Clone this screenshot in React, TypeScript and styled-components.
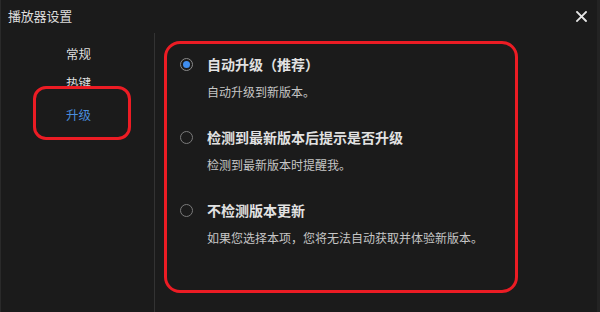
import React from "react";
import styled, { createGlobalStyle } from "styled-components";

const Global = createGlobalStyle`
  html, body { margin: 0; padding: 0; background: #1b1b1b; }
  body { font-family: "Noto Sans CJK SC", "Noto Sans", sans-serif; }
`;

const Window = styled.div`
  width: 600px;
  height: 312px;
  box-sizing: border-box;
  background: #1b1b1b;
  border-left: 1px solid #2a2a2a;
  border-right: 3px solid #232323;
  display: flex;
  flex-direction: column;
  overflow: hidden;
`;

const TitleBar = styled.div`
  height: 33px;
  flex: none;
  display: flex;
  align-items: center;
  justify-content: space-between;
  padding: 0 9px 2px 7px;
  box-sizing: border-box;
`;

const Title = styled.div`
  font-size: 13px;
  color: #dcdcdc;
  letter-spacing: -0.2px;
`;

const Close = styled.button`
  width: 14px;
  height: 14px;
  padding: 0;
  border: none;
  background: transparent;
  display: flex;
  align-items: center;
  justify-content: center;
  margin-top: 1px;
`;

const Body = styled.div`
  flex: 1;
  display: flex;
  min-height: 0;
`;

const Sidebar = styled.nav`
  position: relative;
  width: 154px;
  flex: none;
  border-right: 1px solid #333;
  display: flex;
  flex-direction: column;
  padding-top: 8px;
  box-sizing: border-box;
`;

const NavItem = styled.div<{ $active?: boolean; $h: number }>`
  height: ${(p) => p.$h}px;
  display: flex;
  align-items: center;
  padding-left: 65px;
  font-size: 12.5px;
  color: ${(p) => (p.$active ? "#4a8ddc" : "#dedede")};
`;

const Highlight = styled.div`
  position: absolute;
  left: 32px;
  top: 53px;
  width: 98px;
  height: 54px;
  box-sizing: border-box;
  border: 3px solid #ec1c24;
  border-radius: 13px;
`;

const Content = styled.main`
  flex: 1;
  padding: 8px 0 0 9px;
`;

const Panel = styled.section`
  width: 354px;
  height: 252px;
  box-sizing: border-box;
  border: 3px solid #ec1c24;
  border-radius: 16px;
  padding: 10px 0 0 13px;
  display: flex;
  flex-direction: column;
  gap: 25px;
`;

const Option = styled.div`
  display: grid;
  grid-template-columns: 13px 1fr;
  column-gap: 14px;
  row-gap: 8px;
  align-items: center;
`;

const Radio = styled.span<{ $checked?: boolean }>`
  width: 13px;
  height: 13px;
  box-sizing: border-box;
  border-radius: 50%;
  border: 1.5px solid ${(p) => (p.$checked ? "#8a8a8a" : "#7a7a7a")};
  display: flex;
  align-items: center;
  justify-content: center;
  &::after {
    content: "";
    width: 7px;
    height: 7px;
    border-radius: 50%;
    background: ${(p) => (p.$checked ? "#3f8ef0" : "transparent")};
  }
`;

const OptTitle = styled.div`
  font-size: 14px;
  font-weight: 700;
  color: #e2e2e2;
  line-height: 20px;
`;

const OptDesc = styled.div`
  grid-column: 2;
  font-size: 12px;
  color: #c6c6c6;
  line-height: 20px;
`;

const options = [
  { title: "自动升级（推荐）", desc: "自动升级到新版本。", checked: true },
  { title: "检测到最新版本后提示是否升级", desc: "检测到最新版本时提醒我。" },
  { title: "不检测版本更新", desc: "如果您选择本项，您将无法自动获取并体验新版本。" },
];

export default function App() {
  return (
    <>
      <Global />
      <Window>
        <TitleBar>
          <Title>播放器设置</Title>
          <Close aria-label="close">
            <svg width="11" height="11" viewBox="0 0 11 11">
              <path d="M1 1L10 10M10 1L1 10" stroke="#e6e6e6" strokeWidth="1.8" strokeLinecap="square" />
            </svg>
          </Close>
        </TitleBar>
        <Body>
          <Sidebar>
            <NavItem $h={24}>常规</NavItem>
            <NavItem $h={34}>热键</NavItem>
            <NavItem $h={30} $active>升级</NavItem>
            <Highlight />
          </Sidebar>
          <Content>
            <Panel>
              {options.map((o) => (
                <Option key={o.title}>
                  <Radio $checked={o.checked} />
                  <OptTitle>{o.title}</OptTitle>
                  <OptDesc>{o.desc}</OptDesc>
                </Option>
              ))}
            </Panel>
          </Content>
        </Body>
      </Window>
    </>
  );
}
